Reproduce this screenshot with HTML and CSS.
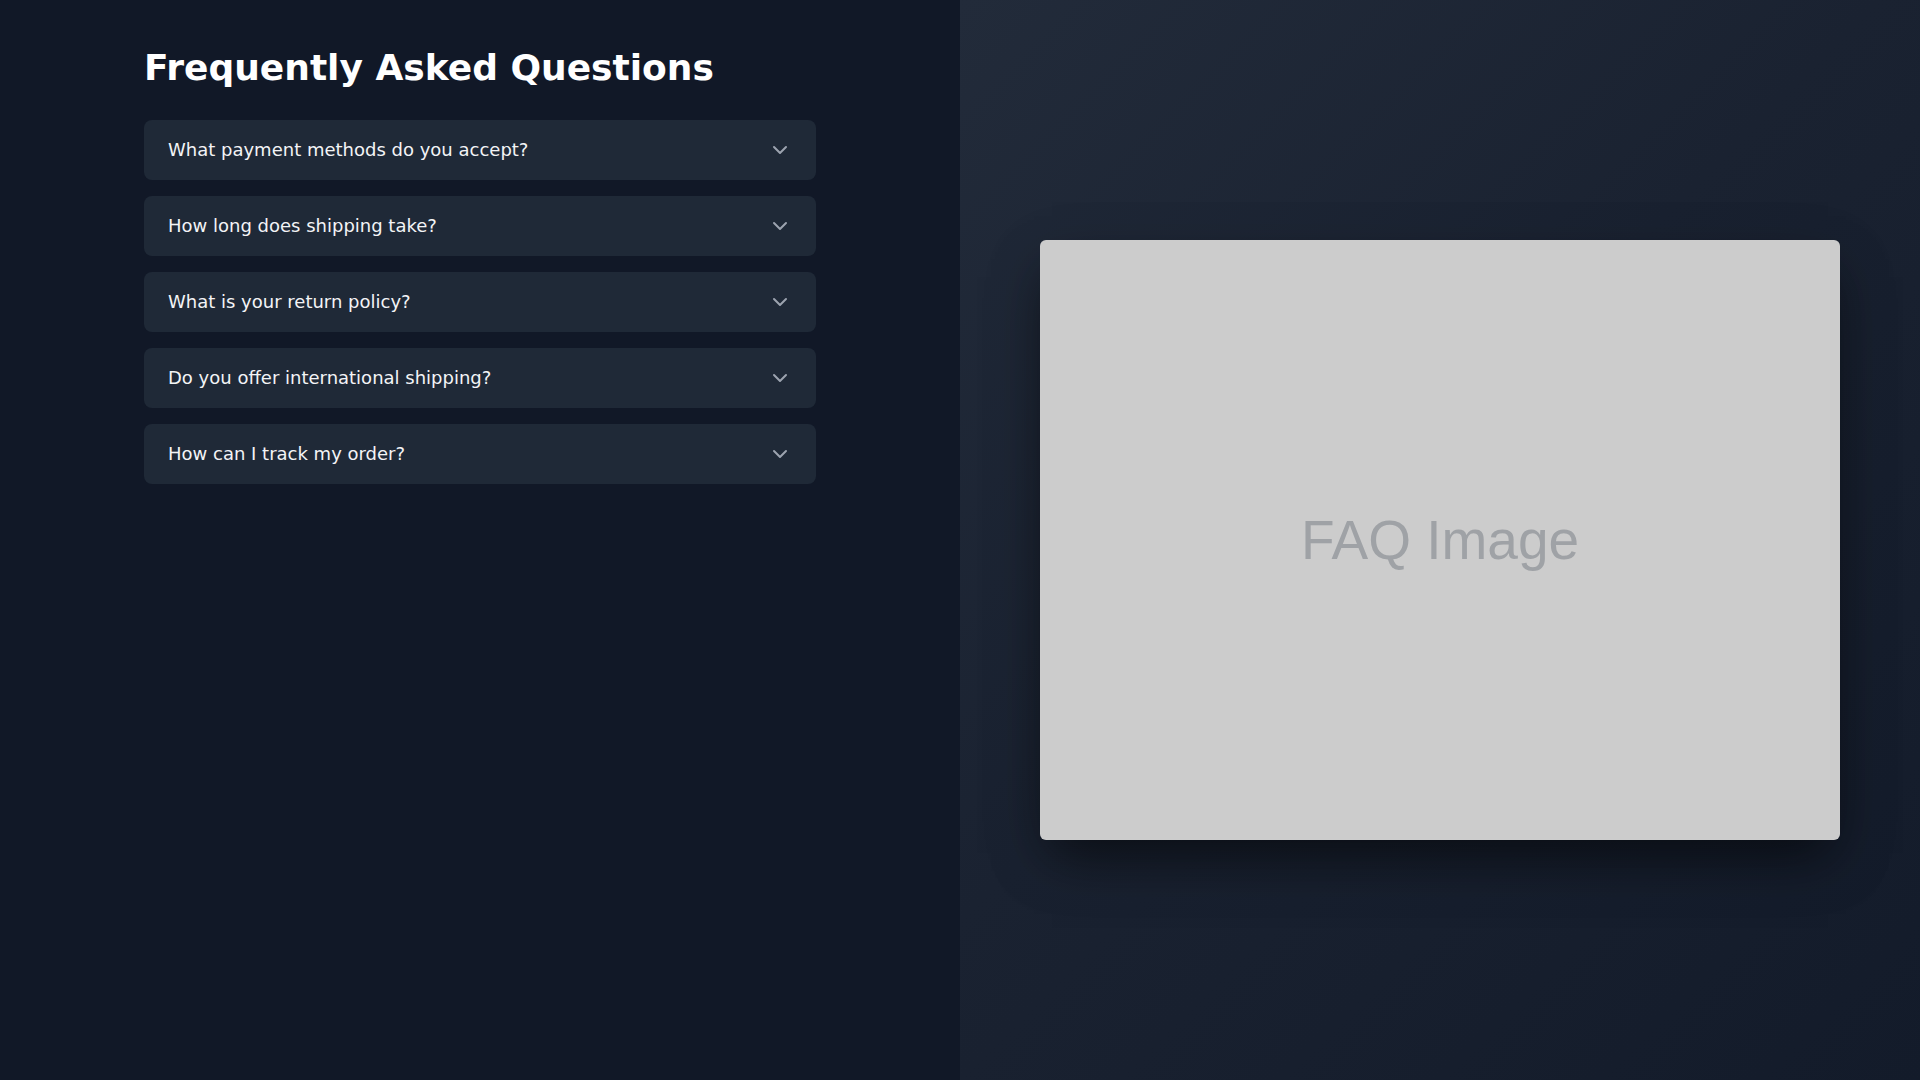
FILE: index.html
```html
<!DOCTYPE html>
<html lang="en">
<head>
<meta charset="utf-8">
<title>FAQ</title>
<link rel="stylesheet" href="styles.css">
</head>
<body>
<main class="page">
  <section class="faq-panel">
    <div class="faq-inner">
      <h1 class="faq-title">Frequently Asked Questions</h1>
      <div class="faq-list">
        <div class="faq-item"><span class="faq-q">What payment methods do you accept?</span><svg class="chev" viewBox="0 0 24 24" width="24" height="24"><path d="M6 9l6 6 6-6"/></svg></div>
        <div class="faq-item"><span class="faq-q">How long does shipping take?</span><svg class="chev" viewBox="0 0 24 24" width="24" height="24"><path d="M6 9l6 6 6-6"/></svg></div>
        <div class="faq-item"><span class="faq-q">What is your return policy?</span><svg class="chev" viewBox="0 0 24 24" width="24" height="24"><path d="M6 9l6 6 6-6"/></svg></div>
        <div class="faq-item"><span class="faq-q">Do you offer international shipping?</span><svg class="chev" viewBox="0 0 24 24" width="24" height="24"><path d="M6 9l6 6 6-6"/></svg></div>
        <div class="faq-item"><span class="faq-q">How can I track my order?</span><svg class="chev" viewBox="0 0 24 24" width="24" height="24"><path d="M6 9l6 6 6-6"/></svg></div>
      </div>
    </div>
  </section>
  <section class="image-panel">
    <div class="faq-image"><span>FAQ Image</span></div>
  </section>
</main>
</body>
</html>
```

FILE: styles.css
```css
* { box-sizing: border-box; }
html, body { margin: 0; padding: 0; }
body {
  font-family: "DejaVu Sans", sans-serif;
  background: #111827;
  color: #fff;
}
.page {
  display: grid;
  grid-template-columns: 1fr 1fr;
  height: 1080px;
}
.faq-panel {
  background: #111827;
  padding: 48px;
}
.faq-inner {
  max-width: 672px;
  margin: 0 auto;
}
.faq-title {
  margin: 0 0 32px;
  font-size: 36px;
  line-height: 40px;
  font-weight: 700;
  color: #ffffff;
}
.faq-list {
  display: flex;
  flex-direction: column;
  gap: 16px;
}
.faq-item {
  display: flex;
  align-items: center;
  justify-content: space-between;
  background: #1f2937;
  border-radius: 8px;
  padding: 16px 24px;
  height: 60px;
}
.faq-q {
  font-size: 18px;
  line-height: 28px;
  color: #f3f4f6;
}
.chev {
  flex: none;
  fill: none;
  stroke: #9ca3af;
  stroke-width: 2;
  stroke-linecap: round;
  stroke-linejoin: round;
}
.image-panel {
  display: flex;
  align-items: center;
  justify-content: center;
  background: linear-gradient(135deg, #222b3a 0%, #1a2231 45%, #131b2a 100%);
}
.faq-image {
  width: 800px;
  height: 600px;
  background: #cccccc;
  border-radius: 6px;
  display: flex;
  align-items: center;
  justify-content: center;
  box-shadow: 0 25px 50px -12px rgba(0, 0, 0, 0.5), 0 20px 60px rgba(0, 0, 0, 0.18);
}
.faq-image span {
  font-family: "Liberation Sans", Arial, sans-serif;
  font-size: 55px;
  color: #9fa2a6;
}
```
